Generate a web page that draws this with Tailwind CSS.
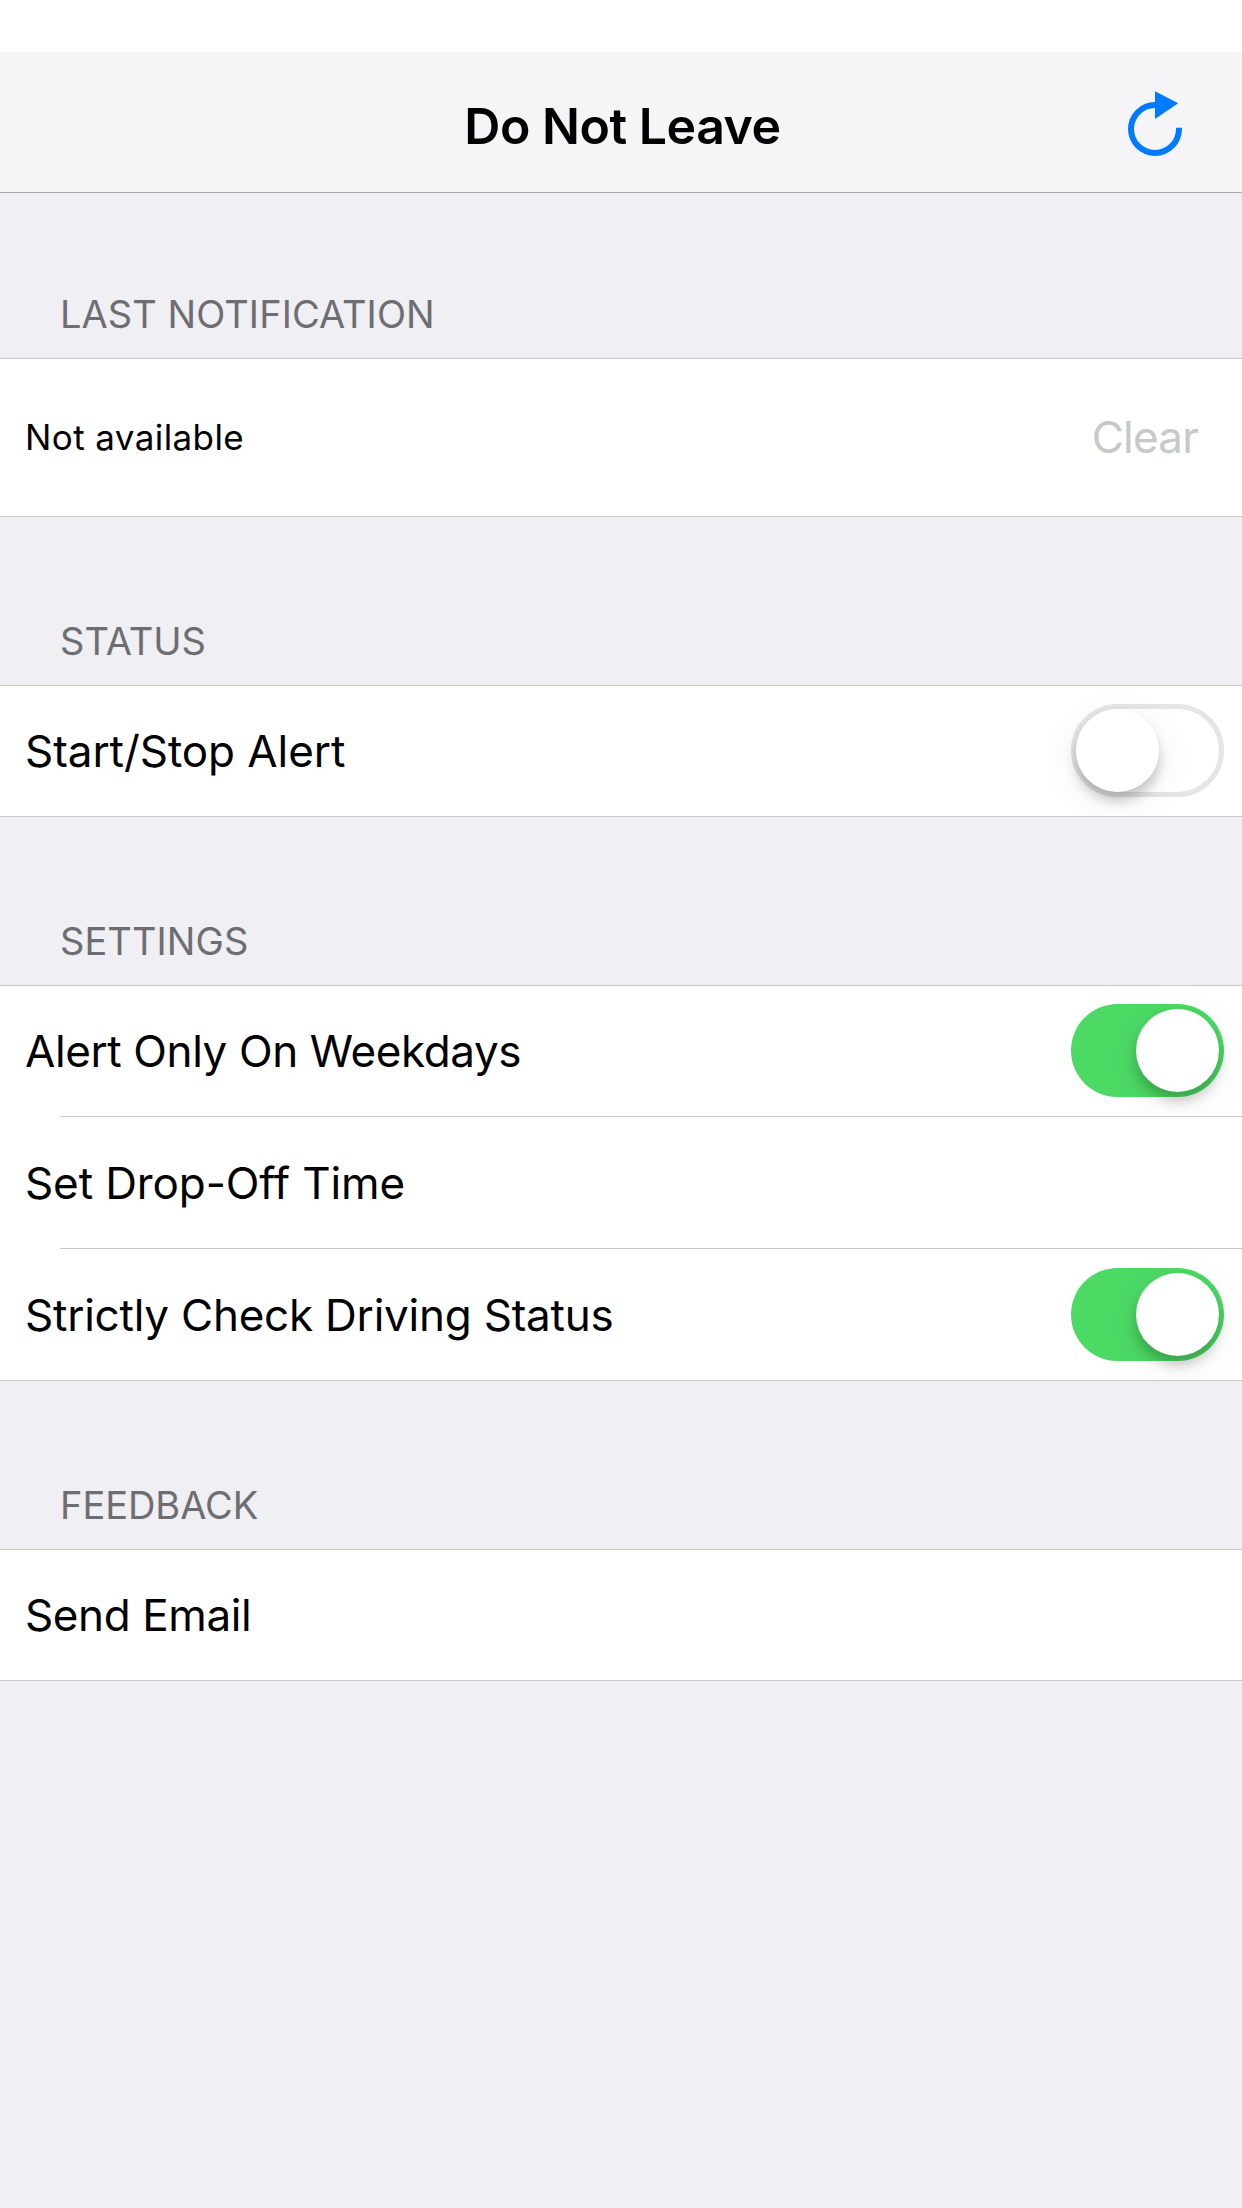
<!DOCTYPE html>
<html lang="en">
<head>
<meta charset="utf-8">
<title>Do Not Leave</title>
<script src="https://cdn.jsdelivr.net/npm/@tailwindcss/browser@4"></script>
</head>
<body class="min-h-screen bg-[#efeff4] font-['Inter','Roboto',sans-serif] text-[44px] leading-[54px] text-black">
  <div class="h-[52px] bg-white"></div>
  <header class="grid h-[141px] grid-cols-[1fr_auto_1fr] items-center border-b border-[#a7a7ac] bg-[#f5f5f7]">
    <span></span>
    <h1 class="pt-2 pl-[3px] text-[50px] font-semibold leading-[60px] tracking-[-0.476px]">Do Not Leave</h1>
    <button class="justify-self-end pr-[60px] pt-1" aria-label="Refresh">
      <svg class="block h-[66px] w-[54px]" viewBox="0 0 54 66">
        <path d="M51 36.7V38A24 24 0 1 1 27 14" fill="none" stroke="#007aff" stroke-width="6"/>
        <path d="M27 0.3L50.2 12.3L27 28Z" fill="#007aff"/>
      </svg>
    </button>
  </header>

  <main>
    <section>
      <h2 class="flex h-[165px] items-end pb-[21px] pl-[60px] text-[38px] leading-[46px] tracking-[0.061px] text-[#6d6d72]">LAST NOTIFICATION</h2>
      <div class="flex h-[159px] items-center justify-between border-y border-[#c8c7cc] bg-white pb-0.5 pl-[25px] pr-[44px]">
        <span class="text-[35px] leading-[42px] tracking-[0.404px]">Not available</span>
        <button class="tracking-[-0.771px] text-[#c8c8c8]">Clear</button>
      </div>
    </section>

    <section>
      <h2 class="flex h-[168px] items-end pb-[21px] pl-[60px] text-[38px] leading-[46px] text-[#6d6d72]">STATUS</h2>
      <div class="flex h-[132px] items-center justify-between overflow-hidden border-y border-[#c8c7cc] bg-white pl-[25px] pr-[18px]">
        <span class="tracking-[-0.057px]">Start/Stop Alert</span>
        <div class="mb-0.5 flex h-[93px] w-[153px] rounded-full border-5 border-[#e5e5e5] bg-white">
          <div class="size-[83px] rounded-full bg-white shadow-[0_9px_12px_rgba(0,0,0,0.2),0_9px_40px_rgba(0,0,0,0.07)]"></div>
        </div>
      </div>
    </section>

    <section>
      <h2 class="flex h-[168px] items-end pb-[21px] pl-[60px] text-[38px] leading-[46px] tracking-[0.076px] text-[#6d6d72]">SETTINGS</h2>
      <div class="border-y border-[#c8c7cc] bg-white">
        <div class="flex h-[130px] items-center justify-between overflow-hidden pl-[25px] pr-[18px]">
          <span class="tracking-[-0.4px]">Alert Only On Weekdays</span>
          <div class="mb-0.5 flex h-[93px] w-[153px] justify-end rounded-full bg-[#4cd964] p-[5px]">
            <div class="size-[83px] rounded-full bg-white shadow-[0_9px_12px_rgba(0,0,0,0.2),0_9px_40px_rgba(0,0,0,0.07)]"></div>
          </div>
        </div>
        <div class="ml-[60px] h-px bg-[#c8c7cc]"></div>
        <div class="flex h-[131px] items-center pl-[25px]">
          <span class="tracking-[-0.111px]">Set Drop-Off Time</span>
        </div>
        <div class="ml-[60px] h-px bg-[#c8c7cc]"></div>
        <div class="flex h-[131px] items-center justify-between overflow-hidden pl-[25px] pr-[18px]">
          <span class="tracking-[-0.228px]">Strictly Check Driving Status</span>
          <div class="flex h-[93px] w-[153px] justify-end rounded-full bg-[#4cd964] p-[5px]">
            <div class="size-[83px] rounded-full bg-white shadow-[0_9px_12px_rgba(0,0,0,0.2),0_9px_40px_rgba(0,0,0,0.07)]"></div>
          </div>
        </div>
      </div>
    </section>

    <section>
      <h2 class="flex h-[168px] items-end pb-[21px] pl-[60px] text-[38px] leading-[46px] tracking-[-0.05px] text-[#6d6d72]">FEEDBACK</h2>
      <div class="flex h-[132px] items-center border-y border-[#c8c7cc] bg-white pl-[25px]">
        <span class="tracking-[-0.394px]">Send Email</span>
      </div>
    </section>
  </main>
</body>
</html>
